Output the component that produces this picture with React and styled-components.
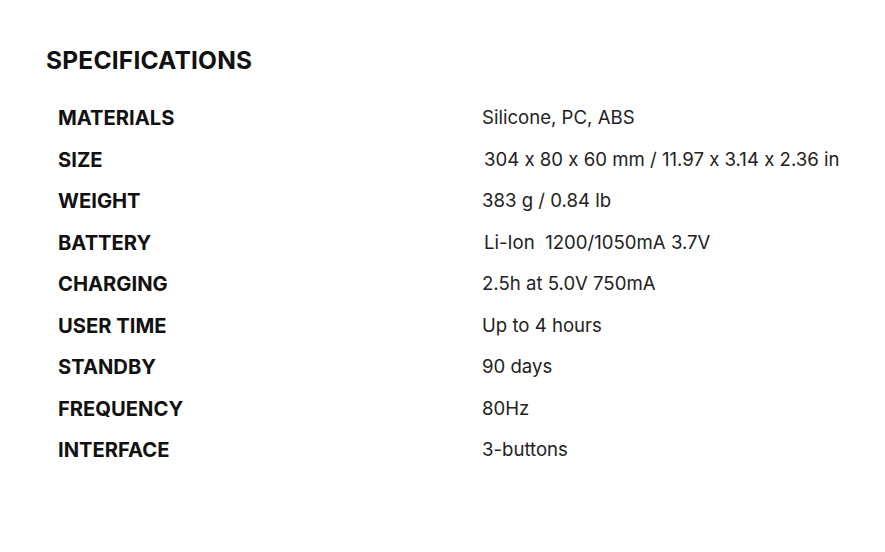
import React from 'react'
import styled, { createGlobalStyle } from 'styled-components'

const Global = createGlobalStyle`
  body {
    margin: 0;
    background: #fff;
    font-family: Inter, "Liberation Sans", sans-serif;
    font-feature-settings: "calt" 0;
  }
`

const specs = [
  ['MATERIALS', 'Silicone, PC, ABS'],
  ['SIZE', '304 x 80 x 60 mm / 11.97 x 3.14 x 2.36 in', 2],
  ['WEIGHT', '383 g / 0.84 lb'],
  ['BATTERY', 'Li-Ion\u00a0 1200/1050mA 3.7V', 2],
  ['CHARGING', '2.5h at 5.0V 750mA'],
  ['USER TIME', 'Up to 4 hours'],
  ['STANDBY', '90 days'],
  ['FREQUENCY', '80Hz'],
  ['INTERFACE', '3-buttons'],
]

const Section = styled.section`
  padding: 44px 0 0 46px;
`

const Heading = styled.h2`
  margin: 0 0 21px;
  font-size: 24.5px;
  font-weight: 700;
  color: #111;
  letter-spacing: 0.2px;
  line-height: 32px;
`

const Table = styled.div`
  display: grid;
  grid-template-columns: 424px 1fr;
  padding-left: 12px;
`

const Label = styled.div`
  font-size: 20.2px;
  font-weight: 700;
  color: #111;
  line-height: 41.5px;
`

const Value = styled.div`
  font-size: 18.6px;
  font-weight: 400;
  color: #222;
  line-height: 41.5px;
  white-space: pre;
  padding-left: ${p => p.$indent || 0}px;
`

export default function App() {
  return (
    <>
      <Global />
      <Section>
        <Heading>SPECIFICATIONS</Heading>
        <Table>
          {specs.map(([k, v, indent]) => (
            <React.Fragment key={k}>
              <Label>{k}</Label>
              <Value $indent={indent}>{v}</Value>
            </React.Fragment>
          ))}
        </Table>
      </Section>
    </>
  )
}
